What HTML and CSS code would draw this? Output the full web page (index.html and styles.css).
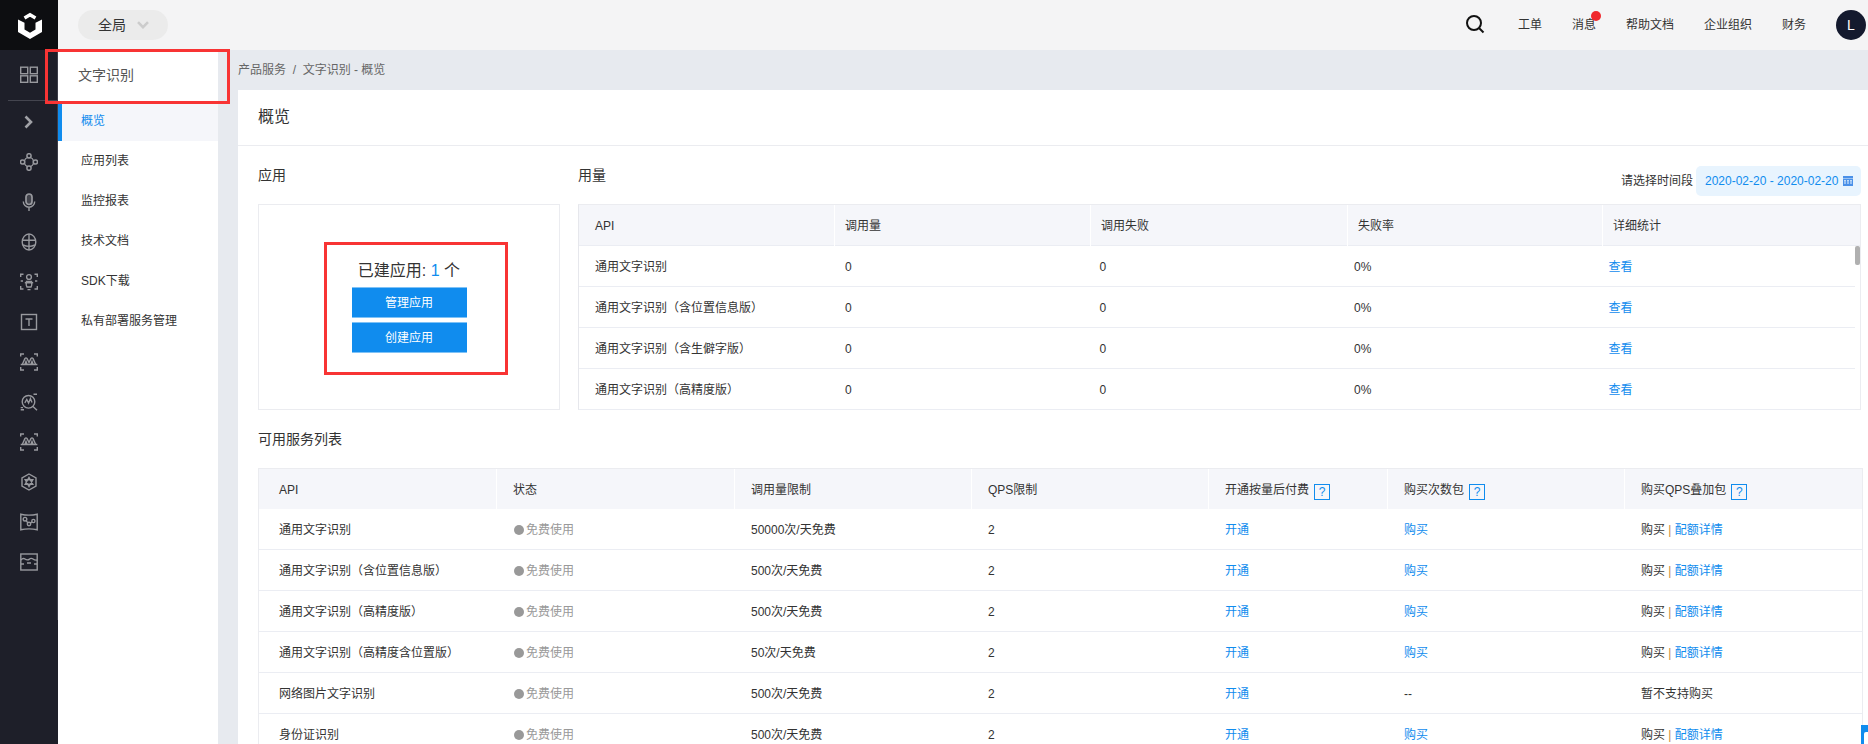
FILE: index.html
```html
<!DOCTYPE html>
<html lang="zh-CN">
<head>
<meta charset="utf-8">
<title>文字识别 - 概览</title>
<link rel="stylesheet" href="styles.css">
</head>
<body>
<div class="app">
  <nav class="rail">
    <div class="logo">
      <svg width="28" height="30" viewBox="0 0 28 30"><path class="logo-s" d="M8.5 8L14 4.8L19.5 8"/><path class="logo-f" d="M2 9.5L8.5 12.8V19.5L14 22.8L19.5 19.5V12.8L26 9.5V22L14 29L2 22Z"/></svg>
    </div>
    <div class="rail-item rail-first"><svg class="ico" viewBox="0 0 18 18"><rect x=".7" y="1.2" width="7" height="6.5"/><rect x="10.3" y="1.2" width="7" height="6.5"/><rect x=".7" y="9.8" width="7" height="6.5"/><rect x="10.3" y="9.8" width="7" height="6.5"/></svg></div>
    <div class="rail-div"></div>
    <div class="rail-item rail-toggle"><svg class="ico ico-bold" viewBox="0 0 18 18"><path d="M5.5 3.5L11 9L5.5 14.5"/></svg></div>
    <div class="rail-item"><svg class="ico" viewBox="0 0 18 18"><circle cx="9" cy="9" r="4.6"/><circle class="knock" cx="9" cy="2.8" r="2.1"/><circle class="knock" cx="2.6" cy="9" r="2.1"/><circle class="knock" cx="15.4" cy="9" r="2.1"/><circle class="knock" cx="9" cy="15.2" r="2.1"/></svg></div>
    <div class="rail-item"><svg class="ico" viewBox="0 0 18 18"><rect class="thick" x="6" y="1" width="6" height="10.5" rx="3"/><path d="M3.3 8.5a5.7 5.7 0 0 0 11.4 0M9 14.2V18"/></svg></div>
    <div class="rail-item"><svg class="ico" viewBox="0 0 18 18"><ellipse cx="9" cy="9" rx="6.8" ry="8"/><path d="M9 1V17M2.2 7.2H15.8M3 12q6 2.8 12 0"/></svg></div>
    <div class="rail-item"><svg class="ico" viewBox="0 0 18 18"><path d="M.7 4V1.2H3.5M14.5 1.2H17.3V4M.7 13V16H3.5M14.5 16H17.3V13M.7 8H3M15 8H17.3"/><circle cx="9" cy="4" r="2.4"/><path d="M6.5 8.5C6 11 6 12.5 7 14H11C12 12.5 12 11 11.5 8.5ZM4.8 9.8H13.2M7.5 16.6H10.5"/></svg></div>
    <div class="rail-item"><svg class="ico" viewBox="0 0 18 18"><rect x="1.5" y="1.5" width="15" height="15"/><path d="M5.5 6H12.5M9 6V13"/></svg></div>
    <div class="rail-item"><svg class="ico" viewBox="0 0 18 18"><path d="M.7 3.5V1H4M14 1H17.3V3.5M.7 14V17H4M14 17H17.3V14M.7 11.5H17.3M2.5 11L5 5.5Q6 4.3 7 5.5L9 9.5L11 5.5Q12 4.3 13 5.5L15.5 11M5 11L6 8.5L7 11M11 11L12 8.5L13 11"/></svg></div>
    <div class="rail-item"><svg class="ico" viewBox="0 0 18 18"><circle cx="8.5" cy="8.8" r="6.3"/><path d="M13 13.5L17 17.3M4.8 9.8L6.8 6.5L8.6 10L10.4 5.6L12 9.6M13.5 1.3H17M.7 14.6H3M.7 16.8H4"/></svg></div>
    <div class="rail-item"><svg class="ico" viewBox="0 0 18 18"><path d="M.7 3.5V1H4M14 1H17.3V3.5M.7 14V17H4M14 17H17.3V14M.7 11.5H17.3M2.5 11L5 5.5Q6 4.3 7 5.5L9 9.5L11 5.5Q12 4.3 13 5.5L15.5 11M5 11L6 8.5L7 11M11 11L12 8.5L13 11"/></svg></div>
    <div class="rail-item"><svg class="ico" viewBox="0 0 18 18"><path d="M9 1L16 5V13L9 17L2 13V5ZM9 4.5L12.8 11.2H5.2ZM9 13.5L5.2 6.8H12.8Z"/></svg></div>
    <div class="rail-item"><svg class="ico" viewBox="0 0 18 18"><path d="M.8 1.2Q9 3 17.2 1.2V16.8Q9 15 .8 16.8Z"/><circle cx="5" cy="6.2" r="1.8"/><circle cx="9" cy="11" r="1.7"/><circle cx="13.4" cy="8" r="1.6"/><path d="M6.2 7.6L7.8 9.8M10.4 10.2L12.1 8.8"/></svg></div>
    <div class="rail-item"><svg class="ico" viewBox="0 0 18 18"><rect x=".8" y="1" width="16.4" height="16"/><path d="M.8 7Q3 4.5 5 6T9 6.5Q11 4.5 13 6T17.2 7M.8 11H4M14 11H17.2M7 10H11"/></svg></div>
    <span class="rail-edge"></span>
  </nav>

  <div class="page">
    <header class="topbar">
      <div class="scope"><span>全局</span><svg class="scope-arrow" width="12" height="8" viewBox="0 0 12 8"><path d="M1 1.2L6 6.2L11 1.2"/></svg></div>
      <div class="tools">
        <svg class="search" width="21" height="21" viewBox="0 0 21 21"><circle cx="9" cy="9" r="7"/><path d="M14 14L18.5 18.5"/></svg>
        <a class="tool">工单</a>
        <a class="tool tool-msg">消息<i class="dot"></i></a>
        <a class="tool">帮助文档</a>
        <a class="tool">企业组织</a>
        <a class="tool">财务</a>
        <div class="avatar">L</div>
      </div>
    </header>

    <div class="below">
      <aside class="menu">
        <div class="menu-title">文字识别</div>
        <a class="menu-item active">概览</a>
        <a class="menu-item">应用列表</a>
        <a class="menu-item">监控报表</a>
        <a class="menu-item">技术文档</a>
        <a class="menu-item">SDK下载</a>
        <a class="menu-item">私有部署服务管理</a>
      </aside>

      <main class="main">
        <div class="crumbs">产品服务 &nbsp;/&nbsp; 文字识别 - 概览</div>
        <section class="card">
          <h1 class="card-head">概览</h1>
          <div class="card-body">
            <div class="overview">
              <div>
                <h2 class="sec-title">应用</h2>
                <div class="app-box">
                  <p class="app-count">已建应用: <b>1</b> 个</p>
                  <a class="btn">管理应用</a>
                  <a class="btn">创建应用</a>
                </div>
              </div>
              <div>
                <div class="sec-row">
                  <h2 class="sec-title">用量</h2>
                  <div class="range">
                    <span>请选择时间段</span>
                    <div class="picker">2020-02-20 - 2020-02-20
                      <svg class="cal" width="10" height="10" viewBox="0 0 10 10"><path d="M0 0H10V2.5H0Z"/><path fill-rule="evenodd" d="M0 3H10V10H0ZM1 4.2V5.4H3V4.2ZM4 4.2V5.4H6V4.2ZM7 4.2V5.4H9V4.2ZM1 6.4V7.6H3V6.4ZM4 6.4V7.6H6V6.4ZM7 6.4V7.6H9V6.4Z"/></svg>
                    </div>
                  </div>
                </div>
                <div class="usage">
                  <div class="usage-head">
                    <span>API</span><span>调用量</span><span>调用失败</span><span>失败率</span><span>详细统计</span>
                  </div>
                  <div class="usage-row"><span>通用文字识别</span><span>0</span><span>0</span><span>0%</span><a>查看</a></div>
                  <div class="usage-row"><span>通用文字识别（含位置信息版）</span><span>0</span><span>0</span><span>0%</span><a>查看</a></div>
                  <div class="usage-row"><span>通用文字识别（含生僻字版）</span><span>0</span><span>0</span><span>0%</span><a>查看</a></div>
                  <div class="usage-row"><span>通用文字识别（高精度版）</span><span>0</span><span>0</span><span>0%</span><a>查看</a></div>
                  <i class="thumb"></i>
                </div>
              </div>
            </div>

            <h2 class="sec-title">可用服务列表</h2>
            <table class="services">
              <colgroup>
                <col class="c-api"><col class="c-status"><col class="c-limit"><col class="c-qps"><col class="c-open"><col class="c-pack"><col>
              </colgroup>
              <thead>
                <tr>
                  <th>API</th><th>状态</th><th>调用量限制</th><th>QPS限制</th>
                  <th>开通按量后付费<i class="q">?</i></th>
                  <th>购买次数包<i class="q">?</i></th>
                  <th>购买QPS叠加包<i class="q">?</i></th>
                </tr>
              </thead>
              <tbody>
                <tr><td>通用文字识别</td><td class="free">免费使用</td><td>50000次/天免费</td><td>2</td><td><a>开通</a></td><td><a>购买</a></td><td>购买 <s>|</s> <a>配额详情</a></td></tr>
                <tr><td>通用文字识别（含位置信息版）</td><td class="free">免费使用</td><td>500次/天免费</td><td>2</td><td><a>开通</a></td><td><a>购买</a></td><td>购买 <s>|</s> <a>配额详情</a></td></tr>
                <tr><td>通用文字识别（高精度版）</td><td class="free">免费使用</td><td>500次/天免费</td><td>2</td><td><a>开通</a></td><td><a>购买</a></td><td>购买 <s>|</s> <a>配额详情</a></td></tr>
                <tr><td>通用文字识别（高精度含位置版）</td><td class="free">免费使用</td><td>50次/天免费</td><td>2</td><td><a>开通</a></td><td><a>购买</a></td><td>购买 <s>|</s> <a>配额详情</a></td></tr>
                <tr><td>网络图片文字识别</td><td class="free">免费使用</td><td>500次/天免费</td><td>2</td><td><a>开通</a></td><td>--</td><td>暂不支持购买</td></tr>
                <tr><td>身份证识别</td><td class="free">免费使用</td><td>500次/天免费</td><td>2</td><td><a>开通</a></td><td><a>购买</a></td><td>购买 <s>|</s> <a>配额详情</a></td></tr>
              </tbody>
            </table>
          </div>
        </section>
      </main>
    </div>
  </div>
</div>
<div class="mark mark-menu"></div>
<div class="mark mark-app"></div>
<div class="float-tab"><i></i></div>
</body>
</html>
```

FILE: styles.css
```css
* { box-sizing: border-box; }
html, body { margin: 0; height: 100%; overflow: hidden; }
body {
  font: 12px/20px "Liberation Sans", "Noto Sans CJK SC", sans-serif;
  color: #333;
  background: #fff;
  text-spacing-trim: space-all;
}
h1, h2, p { margin: 0; font-weight: 400; }
a { color: #108cee; text-decoration: none; }
i { font-style: normal; }

.app { display: flex; height: 744px; }

/* icon rail */
.rail { position: relative; width: 58px; flex: none; background: #1e1f29; }
.logo { height: 50px; background: #0d0e11; display: flex; align-items: center; justify-content: center; padding-left: 2px; }
.logo-f { fill: #fff; }
.logo-s { fill: none; stroke: #fff; stroke-width: 3.4; }
.rail-item { height: 40px; display: flex; align-items: center; justify-content: center; }
.rail-first { height: 50px; }
.rail-toggle { height: 41px; }
.rail-div { height: 1px; margin-left: 8px; background: #44454f; }
.rail-edge { position: absolute; right: 0; top: 50px; width: 1px; height: 570px; background: #3c3d48; }
.ico { width: 18px; height: 18px; fill: none; stroke: #98999e; stroke-width: 1.4; }
.ico-bold { stroke: #a0a1a6; stroke-width: 2.6; }
.ico .knock { fill: #1e1f29; stroke-width: 1.5; }
.ico .thick { fill: #98999e; fill-opacity: .3; stroke-width: 1.7; }

/* top bar */
.page { flex: 1; min-width: 0; display: flex; flex-direction: column; }
.topbar { height: 50px; flex: none; display: flex; align-items: center; justify-content: space-between; background: #f4f4f5; padding: 0 2px 0 20px; }
.scope { width: 90px; height: 30px; border-radius: 15px; background: #ebebeb; display: flex; align-items: center; gap: 11px; padding-left: 20px; font-size: 14px; }
.scope-arrow { fill: none; stroke: #ccc; stroke-width: 2.6; }
.tools { display: flex; align-items: center; gap: 30px; }
.search { fill: none; stroke: #111; stroke-width: 2; margin: 0 2px 2px 1px; }
.tool { position: relative; color: #333; }
.dot { position: absolute; left: 19px; top: -4px; width: 10px; height: 10px; border-radius: 50%; background: #f0282d; }
.avatar { width: 30px; height: 30px; border-radius: 50%; background: #141a2e; color: #fff; font-size: 14px; line-height: 30px; text-align: center; }

/* section menu */
.below { flex: 1; min-height: 0; display: flex; }
.menu { width: 160px; flex: none; background: #fff; }
.menu-title { height: 54px; padding-left: 20px; font-size: 14px; line-height: 50px; color: #555; }
.menu-item { display: block; height: 37px; line-height: 35px; margin-bottom: 3px; padding-left: 23px; color: #333; }
.menu-item.active { background: #f5f6fa; color: #108cee; border-left: 4px solid #108cee; padding-left: 19px; }

/* main */
.main { flex: 1; min-width: 0; background: #e7eaef; padding-left: 20px; }
.crumbs { height: 40px; line-height: 40px; color: #666; }
.card { background: #fff; height: 654px; overflow: hidden; }
.card-head { height: 56px; padding-left: 20px; line-height: 54px; font-size: 16px; border-bottom: 1px solid #ebecf0; }
.card-body { padding: 0 5px 0 20px; }
.overview { display: grid; grid-template-columns: 302px 1283px; column-gap: 18px; }
.sec-title { height: 58px; line-height: 58px; font-size: 14px; }
.sec-row { display: flex; justify-content: space-between; }
.range { display: flex; align-items: center; gap: 3px; height: 30px; margin-top: 20px; }
.picker { width: 165px; height: 30px; display: flex; align-items: center; gap: 5px; padding-left: 9px; border-radius: 5px; background: #e8f4fe; color: #108cee; white-space: nowrap; }
.cal { fill: #4a90e8; flex: none; }

.app-box { height: 206px; border: 1px solid #ebecf0; padding-top: 53px; display: flex; flex-direction: column; align-items: center; }
.app-count { font-size: 16px; line-height: 26px; margin-bottom: 3px; }
.app-count b { font-weight: 400; color: #108cee; }
.btn { width: 115px; height: 31px; line-height: 31px; margin-bottom: 4px; text-align: center; color: #fff; background: #108cee; border-top: 1px solid #7fc2f6; border-bottom: 1px solid #7fc2f6; }

.usage { position: relative; height: 206px; border: 1px solid #ebecf0; border-left-color: #e6e7ec; }
.usage-head { display: grid; grid-template-columns: 255px 256px 257px 255px 1fr; height: 41px; background: #f5f6fa; border-bottom: 1px solid #ebedf3; }
.usage-head span { line-height: 42px; padding-left: 10px; border-left: 1px solid #fff; }
.usage-head span:first-child { padding-left: 16px; border-left: 0; }
.usage-row { display: grid; grid-template-columns: 250px 254.5px 254.5px 254.5px 1fr; height: 41px; width: 1276px; line-height: 42px; border-bottom: 1px solid #ebedf3; }
.usage-row > * { padding-left: 16px; }
.thumb { position: absolute; left: 1276px; top: 41px; width: 5px; height: 19px; border-radius: 2px; background: #b0b0b0; }

.services { width: 1605px; table-layout: fixed; border-collapse: separate; border-spacing: 0; border: 1px solid #ebecf0; border-bottom: 0; }
.c-api { width: 237px; }
.c-status { width: 238px; }
.c-limit { width: 237px; }
.c-qps { width: 237px; }
.c-open { width: 179px; }
.c-pack { width: 237px; }
.services th { height: 40px; padding: 2px 0 0 16px; font-weight: 400; text-align: left; background: #f5f6fa; border-left: 1px solid #fff; }
.services th:first-child, .services td:first-child { padding-left: 20px; border-left: 0; }
.services td { height: 41px; padding: 2px 0 0 17px; border-bottom: 1px solid #ebedf3; }
.q { display: inline-block; width: 16px; height: 16px; margin-left: 5px; border: 1px solid #108cee; color: #108cee; font-size: 12px; line-height: 14px; text-align: center; vertical-align: -2px; }
.free { color: #999; }
.free::before { content: ""; display: inline-block; width: 10px; height: 10px; margin: 0 2px 0 1px; border-radius: 50%; background: #999; vertical-align: -1px; }
s { text-decoration: none; color: #c98a3a; }

/* annotation marks laid over the screenshot */
.mark { position: absolute; border: 3px solid #f83434; pointer-events: none; }
.mark-menu { left: 45px; top: 49px; width: 185px; height: 55px; }
.mark-app { left: 324px; top: 242px; width: 184px; height: 133px; }

.float-tab { position: absolute; left: 1861px; top: 725px; width: 7px; height: 19px; background: #108cee; }
.float-tab i { position: absolute; left: 3px; top: 7px; width: 4px; height: 12px; background: #fff; border-radius: 2px 0 0 0; }
```
